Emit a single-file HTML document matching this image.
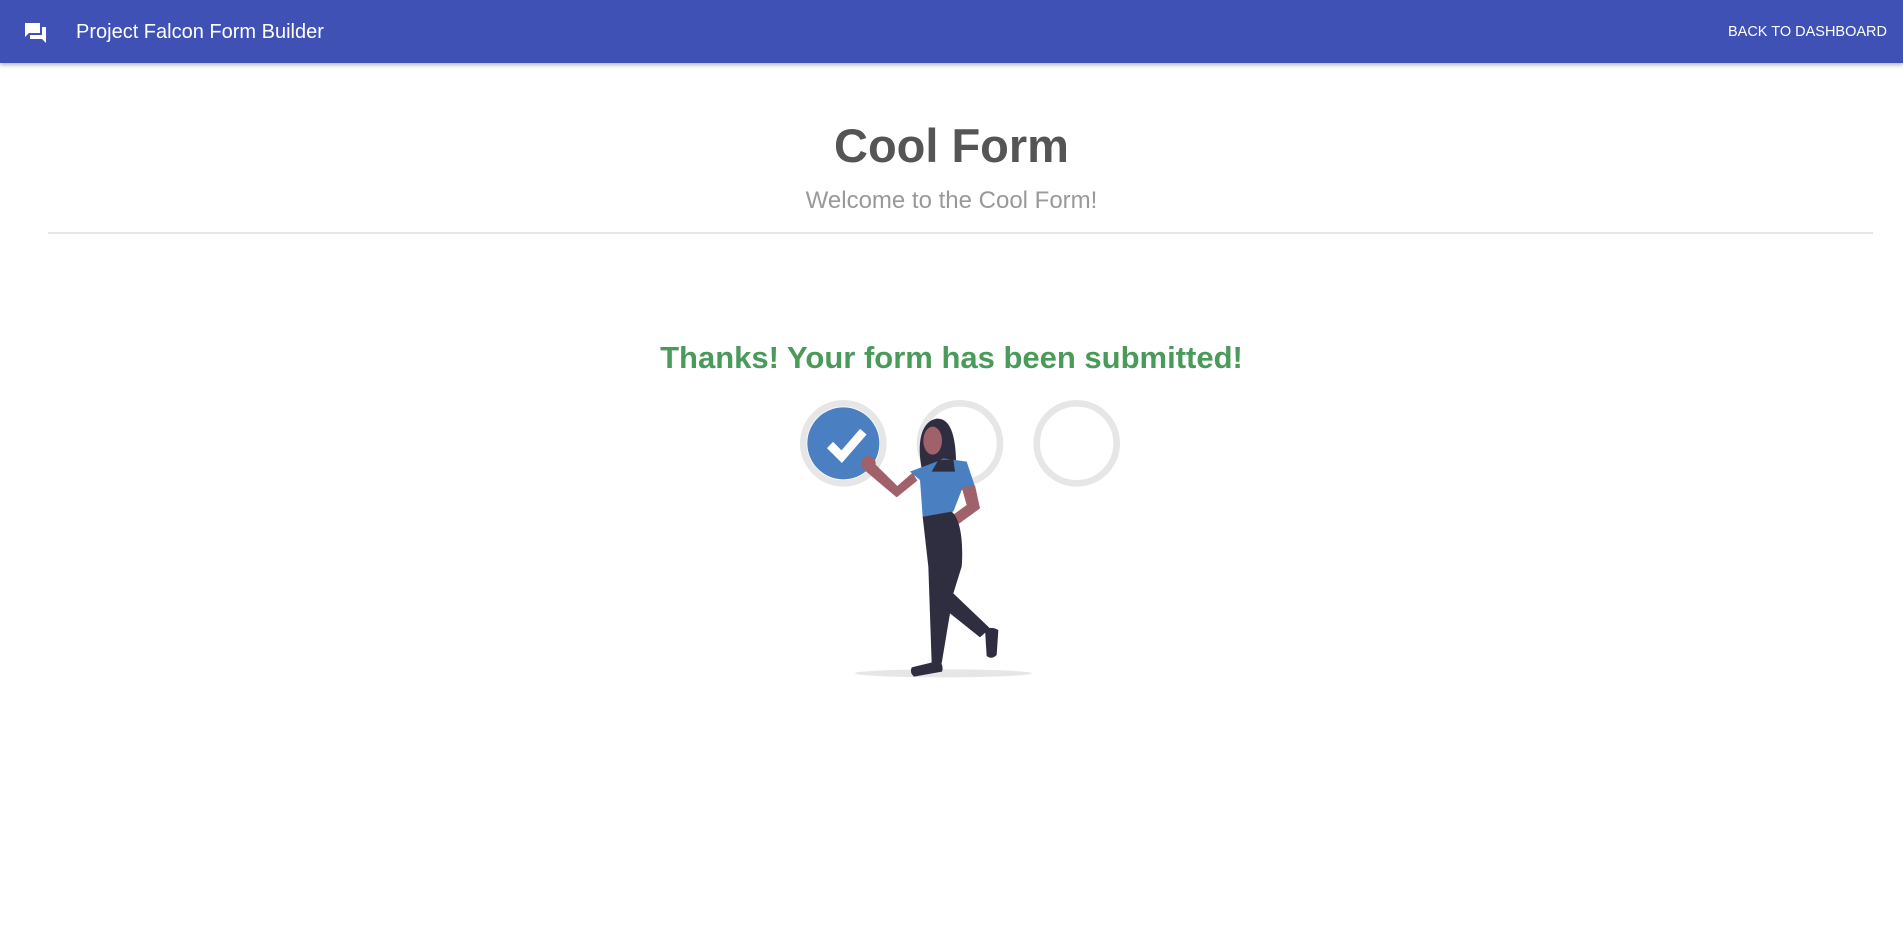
<!DOCTYPE html>
<html><head><meta charset="utf-8"><style>
*{margin:0;padding:0;box-sizing:border-box}
body{width:1903px;height:937px;background:#fff;font-family:"Liberation Sans",sans-serif;position:relative;overflow:hidden}
.bar{position:absolute;left:0;top:0;width:1903px;height:63px;background:#3f51b5;box-shadow:0 2px 4px rgba(0,0,0,.3)}
.t{position:absolute;white-space:nowrap}
.c{position:absolute;left:0;width:1903px;text-align:center;white-space:nowrap}
.c span{display:inline-block}
</style></head><body>
<div class="bar">
<svg style="position:absolute;left:24px;top:22px" width="24" height="22" viewBox="0 0 24 22"><path fill="#fff" d="M1 1h15v10H5l-4 4z M18 5h4v16l-4-4H6v-4h12z"/></svg>
<div class="t" style="left:76px;top:21px;font-size:20px;color:#fff">Project Falcon Form Builder</div>
<div class="t" style="right:16px;top:24px;font-size:14.5px;color:#fff">BACK TO DASHBOARD</div>
</div>
<div class="c" style="top:118px;font-size:47px;font-weight:bold;color:#555"><span>Cool Form</span></div>
<div class="c" style="top:187px;font-size:24px;color:#999"><span>Welcome to the Cool Form!</span></div>
<div style="position:absolute;left:48px;top:232px;width:1825px;height:2px;background:#e6e6e6"></div>
<div class="c" style="top:340px;font-size:31px;font-weight:bold;color:#4a9a5a"><span>Thanks! Your form has been submitted!</span></div>
<svg style="position:absolute;left:780px;top:380px" width="350" height="310" viewBox="0 0 1050 930">
<ellipse cx="490" cy="880" rx="265" ry="12" fill="#e6e6e6"/>
<circle cx="190" cy="190" r="120" fill="none" stroke="#e6e6e6" stroke-width="20"/>
<circle cx="190" cy="190" r="108" fill="#4a7fc1"/>
<path d="M150 195l35 35 65-75" fill="none" stroke="#fff" stroke-width="26"/>
<circle cx="540" cy="190" r="120" fill="none" stroke="#e6e6e6" stroke-width="20"/>
<circle cx="890" cy="190" r="120" fill="none" stroke="#e6e6e6" stroke-width="20"/>
<path d="M425 265C412 200 418 125 470 116C522 113 530 200 528 278L455 278Z" fill="#2f2e41"/>
<ellipse cx="458" cy="182" rx="28" ry="42" fill="#a0616a"/>
<polygon points="262,232 288,255 352,318 398,278 412,302 350,352 248,266" fill="#a0616a"/>
<circle cx="265" cy="250" r="22" fill="#a0616a"/>
<polygon points="390,275 470,245 490,235 560,245 585,320 545,330 520,395 428,410 420,300" fill="#4a7fc1"/>
<path d="M475 240L455 275L525 275L520 238Z" fill="#2f2e41"/>
<polygon points="545,322 585,316 600,385 500,458 470,440 560,375" fill="#a0616a"/>
<circle cx="485" cy="445" r="20" fill="#a0616a"/>
<path d="M428 410L515 395C545 420 550 500 545 560L520 640L630 745L600 772L510 700L485 850L455 850L445 560Z" fill="#2f2e41"/>
<path d="M615 748Q635 738 655 750L650 825Q635 840 620 828Z" fill="#2f2e41"/>
<path d="M395 862L478 842Q492 858 486 875L402 890Q388 878 395 862Z" fill="#2f2e41"/>
</svg>
</body></html>
